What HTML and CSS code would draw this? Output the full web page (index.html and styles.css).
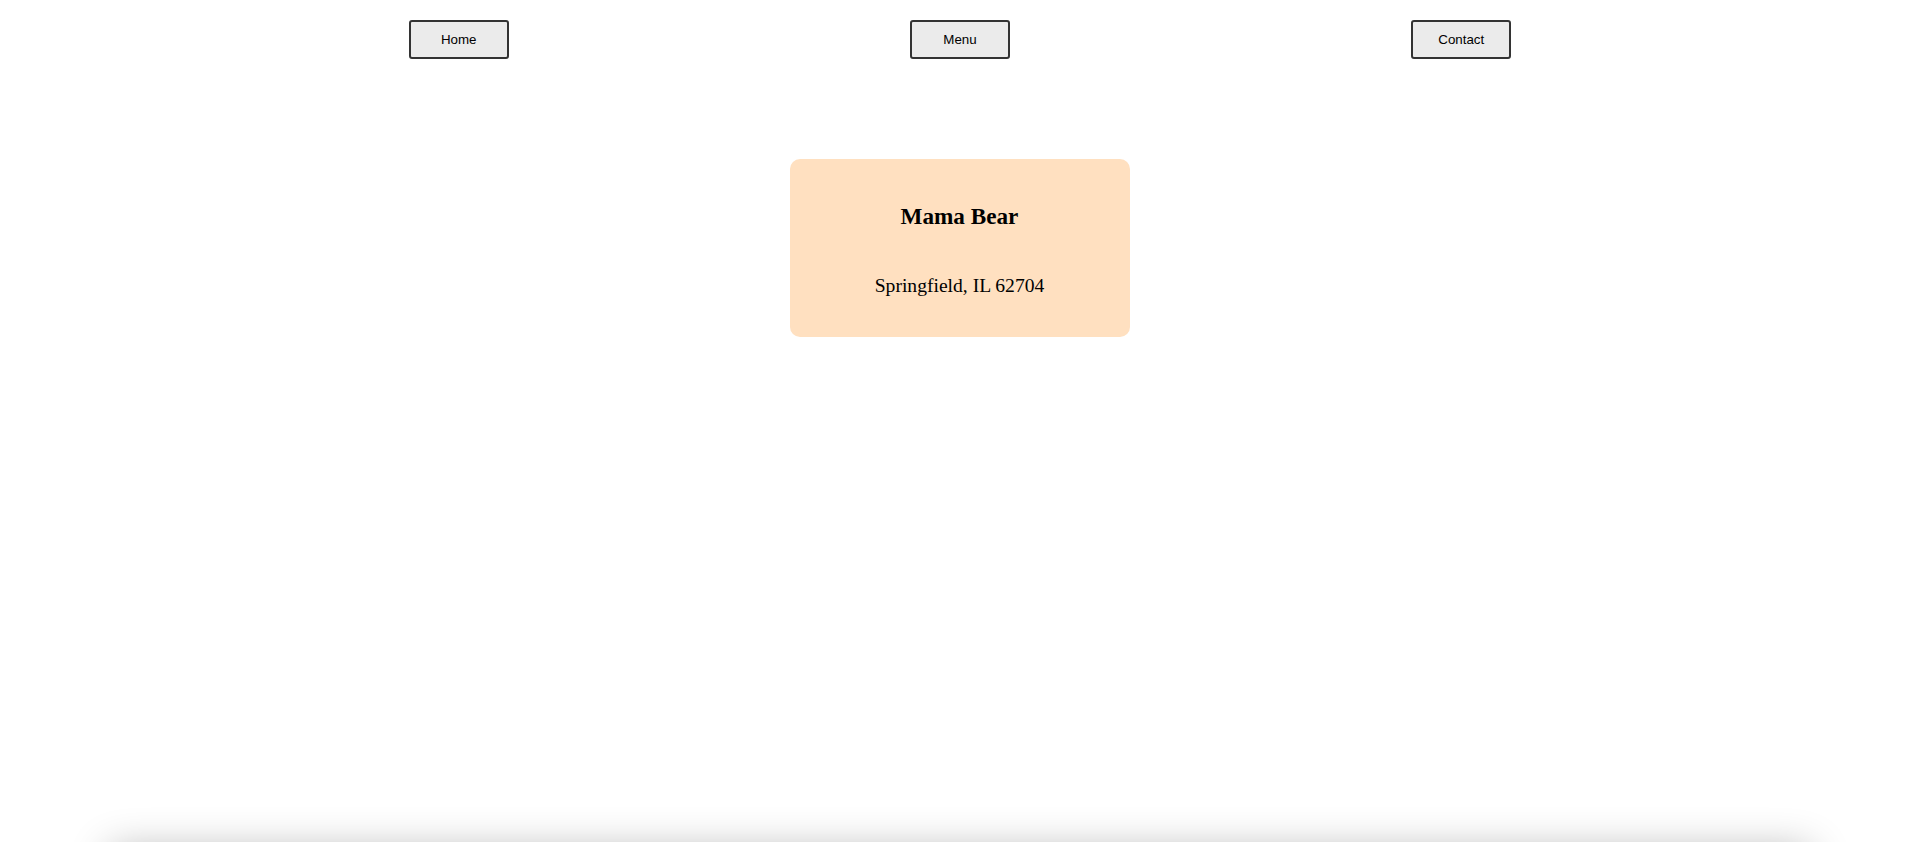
FILE: index.html
```html
<!DOCTYPE html>
<html lang="en">
<head>
<meta charset="utf-8">
<title>Mama Bear</title>
<link rel="stylesheet" href="styles.css">
</head>
<body>
<nav class="nav">
  <button class="nav-btn" type="button">Home</button>
  <button class="nav-btn" type="button">Menu</button>
  <button class="nav-btn" type="button">Contact</button>
</nav>
<main class="main">
  <section class="card">
    <h2 class="card-title">Mama Bear</h2>
    <p class="card-address">Springfield, IL 62704</p>
  </section>
</main>
<footer class="footer"></footer>
</body>
</html>
```

FILE: styles.css
```css
html, body {
  background: #ffffff;
}
body {
  margin: 8px;
  font-family: "Liberation Serif", "Times New Roman", serif;
  color: #000;
}
.nav {
  display: flex;
  justify-content: space-evenly;
  padding: 12px 0 0 1px;
}
.nav-btn {
  width: 100px;
  height: 39px;
  margin: 0 1.5px;
  padding: 10px 0;
  border: 2px solid #333;
  border-radius: 3px;
  background: #ebebeb;
  font-family: "Liberation Sans", Arial, sans-serif;
  font-size: 13.33px;
  color: #000;
}
.main {
  box-sizing: border-box;
  display: flex;
  justify-content: center;
  align-items: flex-start;
  padding-top: 100px;
  height: 791px;
}
.card {
  width: 300px;
  padding: 20px;
  background: #ffe0c0;
  border-radius: 10px;
  text-align: center;
}
.card-title {
  font-size: 23.2px;
  font-weight: bold;
  margin: 24px 0 0;
}
.card-address {
  font-size: 19.6px;
  margin: 45px 0 20px;
}
.footer {
  width: 1700px;
  height: 60px;
  margin: 0 auto;
  box-shadow: 0 0 40px rgba(0, 0, 0, 0.3);
}
```
